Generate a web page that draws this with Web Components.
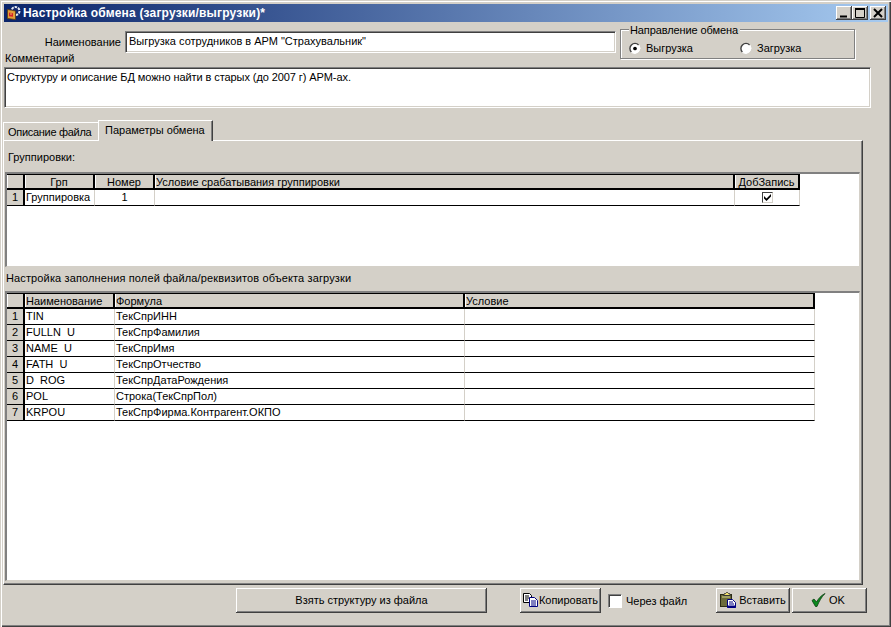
<!DOCTYPE html>
<html lang="ru">
<head>
<meta charset="utf-8">
<title>Настройка обмена</title>
<style>
  html, body { margin: 0; padding: 0; background: #d4d0c8; }
  body { font: 11px "Liberation Sans", Arial, sans-serif; color: #000; }
</style>
</head>
<body>
<x-window caption="Настройка обмена (загрузки/выгрузки)*">
  <x-header name="Выгрузка сотрудников в АРМ &quot;Страхувальник&quot;"></x-header>
  <x-sunken class="memo">Структуру и описание БД можно найти в старых (до 2007 г) АРМ-ах.</x-sunken>
  <x-tabs>
    <x-section label="Группировки:" first>
      <x-grid cols="18,70,60,580,65" aligns="c,c,c,l,c"
        head='["","Грп","Номер","Условие срабатывания группировки","ДобЗапись"]'
        data-aligns="c,l,c,l,c"
        rows='[["1","Группировка","1","","[x]"]]' style="height:95px"></x-grid>
    </x-section>
    <x-section label="Настройка заполнения полей файла/реквизитов объекта загрузки">
      <x-grid cols="18,90,350,350" aligns="c,l,l,l"
        head='["","Наименование","Формула","Условие"]'
        data-aligns="c,l,l,l"
        rows='[["1","TIN","ТекСпрИНН",""],["2","FULLN_U","ТекСпрФамилия",""],["3","NAME_U","ТекСпрИмя",""],["4","FATH_U","ТекСпрОтчество",""],["5","D_ROG","ТекСпрДатаРождения",""],["6","POL","Строка(ТекСпрПол)",""],["7","KRPOU","ТекСпрФирма.Контрагент.ОКПО",""]]'
        style="height:290px"></x-grid>
    </x-section>
  </x-tabs>
  <x-footer></x-footer>
</x-window>

<script>
const FACE = "#d4d0c8";

const ICONS = {
  copy: `<svg width="15" height="14" viewBox="0 0 15 14">
    <path d="M.5.5h6l2 2v7h-8z" fill="#fff" stroke="#000"/>
    <path d="M2 3h4M2 5h4M2 7h3" stroke="#000"/>
    <path d="M6.500 4.500h5l3 3v6h-8z" fill="#fff" stroke="#000080"/>
    <path d="M8 8h5M8 10h5M8 12h5" stroke="#000080"/>
  </svg>`,
  paste: `<svg width="17" height="16" viewBox="0 0 17 16">
    <rect x=".5" y="2.500" width="11" height="12" fill="#6b6b3a" stroke="#2c2c14"/>
    <path d="M2 4h8v2H2z" fill="#a0a060"/>
    <path d="M3.500 3.500l1-2h1l1-1h1l1 1h1l1 2z" fill="#f0e070" stroke="#333"/>
    <path d="M7.500 7.500h5l3 3v5h-8z" fill="#fff" stroke="#000080"/>
    <path d="M9 10h4M9 12h5" stroke="#000080"/>
    <path d="M7 14.500h9" stroke="#000080" stroke-width="2"/>
  </svg>`,
  ok: `<svg width="15" height="14" viewBox="0 0 15 14">
    <path d="M1 7.500l2-1.500 2.500 3C7.500 5.500 10 2.500 14 .5 10.500 4 8 8.500 6 13.500H4.500z" fill="#0a8a1e" stroke="#0b3d12" stroke-width=".8"/>
  </svg>`,
  app: `<svg width="16" height="16" viewBox="0 0 16 16">
    <circle cx="8.500" cy="6" r="4" fill="#16296e" stroke="#e4e8f0" stroke-width="2" stroke-dasharray="2.500 1"/>
    <path d="M.5 4.500l8 1.500v8.500l-8-1z" fill="#e2a03a" stroke="#5e3a10" stroke-width=".8"/>
    <path d="M2 7.500l4 .8v3.500l-4-.6z" fill="#d8202a"/>
    <path d="M3.200 9h1.600" stroke="#f5e060"/>
  </svg>`,
  min: `<svg width="14" height="12" viewBox="0 0 14 12"><path d="M3 8.500h7v2H3z" fill="#000"/></svg>`,
  max: `<svg width="14" height="12" viewBox="0 0 14 12"><path d="M2.500 1.500h9v9h-9z" fill="none" stroke="#000"/><path d="M2 2h10" stroke="#000" stroke-width="2"/></svg>`,
  close: `<svg width="14" height="12" viewBox="0 0 14 12"><path d="M3 2l8 8M11 2l-8 8" stroke="#000" stroke-width="2" fill="none"/></svg>`,
  tick: `<svg width="9" height="9" viewBox="0 0 9 9"><path d="M1 3l2.500 2.500L8 1v2.500L3.500 8 1 5.500z" fill="#000"/></svg>`,
};

class XWindow extends HTMLElement {
  constructor() {
    super();
    this.attachShadow({ mode: "open" });
  }

  connectedCallback() {
    this.shadowRoot.innerHTML = `
      <style>
        :host {
          display: flex;
          flex-direction: column;
          box-sizing: border-box;
          width: 891px;
          height: 627px;
          overflow: hidden;
          padding: 4px 3px 0 3px;
          background: ${FACE};
          box-shadow: inset 1px 1px 0 ${FACE}, inset 2px 2px 0 #fff, inset -1px -1px 0 #404040, inset -2px -2px 0 #808080;
        }
        .bar {
          flex: none;
          display: flex;
          align-items: center;
          height: 18px;
          margin-left: 1px;
          background: linear-gradient(90deg, #0a246a, #a6caf0);
          color: #fff;
          font: bold 12px "Liberation Sans", Arial, sans-serif;
          letter-spacing: .18px;
        }
        .icon { display: flex; margin: 0 0 0 3px; }
        .caption { flex: 1; white-space: nowrap; }
        .controls { display: flex; margin-right: 2px; }
        .controls span {
          display: flex;
          align-items: center;
          justify-content: center;
          width: 16px;
          height: 14px;
          background: ${FACE};
          box-shadow: inset -1px -1px 0 #404040, inset 1px 1px 0 #fff, inset -2px -2px 0 #808080;
        }
        .controls span:last-child { margin-left: 2px; }
      </style>
      <div class="bar">
        <span class="icon">${ICONS.app}</span>
        <span class="caption">${this.getAttribute("caption")}</span>
        <div class="controls"><span>${ICONS.min}</span><span>${ICONS.max}</span><span>${ICONS.close}</span></div>
      </div>
      <slot></slot>
    `;
  }
}

class XSunken extends HTMLElement {
  constructor() {
    super();
    this.attachShadow({ mode: "open" });
  }

  connectedCallback() {
    this.shadowRoot.innerHTML = `
      <style>
        :host {
          display: block;
          box-sizing: border-box;
          background: #fff;
          padding: 2px 3px 0;
          line-height: 14px;
          white-space: nowrap;
          border: 1px solid;
          border-color: #808080 #fff #fff #808080;
          box-shadow: inset 1px 1px 0 #404040, inset -1px -1px 0 ${FACE};
        }
        :host(.memo) {
          width: 867px;
          height: 41px;
          margin-left: 1px;
          padding: 2px 2px 0;
          letter-spacing: -.08px;
        }
      </style>
      <slot></slot>
    `;
  }
}

class XRadio extends HTMLElement {
  constructor() {
    super();
    this.attachShadow({ mode: "open" });
  }

  connectedCallback() {
    const dot = this.hasAttribute("checked") ? `<circle cx="6.500" cy="6.500" r="2" fill="#000"/>` : "";
    this.shadowRoot.innerHTML = `
      <style>
        :host { display: flex; align-items: center; gap: 5px; line-height: 14px; }
        svg { display: block; flex: none; }
      </style>
      <svg width="12" height="13" viewBox="0 0 13 13">
        <circle cx="6.500" cy="6.500" r="5.500" fill="#fff"/>
        <path d="M2.600 10.400A5.500 5.500 0 0 1 10.400 2.600" fill="none" stroke="#404040" stroke-width="1.500"/>
        <path d="M10.900 2.600A6 6 0 0 1 2.600 10.900" fill="none" stroke="#fff"/>
        ${dot}
      </svg>
      <slot></slot>
    `;
  }
}

class XHeader extends HTMLElement {
  constructor() {
    super();
    this.attachShadow({ mode: "open" });
  }

  connectedCallback() {
    this.shadowRoot.innerHTML = `
      <style>
        :host {
          flex: none;
          display: grid;
          grid-template-columns: 612px 239px;
          height: 45px;
          margin-left: 1px;
        }
        .left { display: flex; flex-direction: column; }
        .name { display: flex; align-items: center; gap: 4px; margin-top: 9px; }
        .name label { width: 117px; text-align: right; }
        .name x-sunken { width: 491px; height: 22px; }
        .comment { line-height: 10px; margin: 0 0 0 1px; height: 14px; }
        .group {
          box-sizing: border-box;
          height: 30px;
          margin: 7px 0 0 4px;
          border: 1px solid #808080;
          box-shadow: 1px 1px 0 #fff, inset 1px 1px 0 #fff;
        }
        .legend {
          width: fit-content;
          margin: -7px 0 0 8px;
          padding: 0 2px 0 1px;
          line-height: 14px;
          letter-spacing: -.1px;
          background: ${FACE};
        }
        .radios { display: flex; margin: 4px 0 0 8px; }
        .radios x-radio { width: 111px; }
      </style>
      <div class="left">
        <div class="name">
          <label>Наименование</label>
          <x-sunken>${this.getAttribute("name").replace(/"/g, "&quot;")}</x-sunken>
        </div>
        <div class="comment">Комментарий</div>
      </div>
      <div class="group">
        <div class="legend">Направление обмена</div>
        <div class="radios">
          <x-radio checked>Выгрузка</x-radio>
          <x-radio>Загрузка</x-radio>
        </div>
      </div>
    `;
  }
}

class XTabs extends HTMLElement {
  constructor() {
    super();
    this.attachShadow({ mode: "open" });
  }

  connectedCallback() {
    this.shadowRoot.innerHTML = `
      <style>
        :host { flex: none; display: block; margin-top: 11px; }
        .strip { display: flex; align-items: flex-end; height: 21px; }
        .tab {
          box-sizing: border-box;
          background: ${FACE};
          line-height: 14px;
          white-space: nowrap;
        }
        .off {
          width: 95px;
          height: 18px;
          padding: 2px 0 0 4px;
          letter-spacing: -.3px;
          border-left: 1px solid #fff;
          border-top: 1px solid #fff;
        }
        .on {
          position: relative;
          width: 115px;
          height: 21px;
          margin-bottom: -1px;
          padding: 2px 0 0 6px;
          border-left: 1px solid #fff;
          border-top: 1px solid #fff;
          border-right: 1px solid #404040;
          box-shadow: inset -1px 0 0 #808080;
        }
        .panel {
          box-sizing: border-box;
          width: 860px;
          height: 445px;
          padding-left: 1px;
          border-top: 1px solid #fff;
          border-left: 1px solid #fff;
          border-right: 1px solid #404040;
          border-bottom: 1px solid #404040;
          box-shadow: inset -1px -1px 0 #808080;
        }
      </style>
      <div class="strip">
        <div class="tab off">Описание файла</div>
        <div class="tab on">Параметры обмена</div>
      </div>
      <div class="panel"><slot></slot></div>
    `;
  }
}

class XSection extends HTMLElement {
  constructor() {
    super();
    this.attachShadow({ mode: "open" });
  }

  connectedCallback() {
    const first = this.hasAttribute("first");
    this.shadowRoot.innerHTML = `
      <style>
        :host { display: block; }
        .label {
          height: ${first ? 31 : 24}px;
          box-sizing: border-box;
          padding: ${first ? "9px 0 0 3px" : "4px 0 0 1px"};
          line-height: 14px;
          white-space: nowrap;
          ${first ? "" : "letter-spacing: .13px;"}
        }
      </style>
      <div class="label">${this.getAttribute("label")}</div>
      <slot></slot>
    `;
  }
}

class XGrid extends HTMLElement {
  constructor() {
    super();
    this.attachShadow({ mode: "open" });
  }

  connectedCallback() {
    const cols = this.getAttribute("cols").split(",").map(Number);
    const headAligns = this.getAttribute("aligns").split(",");
    const dataAligns = this.getAttribute("data-aligns").split(",");
    const head = JSON.parse(this.getAttribute("head"));
    const rows = JSON.parse(this.getAttribute("rows"));

    const headHtml = head
      .map((text, i) => `<div class="cell h ${headAligns[i]}">${text}</div>`)
      .join("");
    const rowsHtml = rows
      .map((row) =>
        row
          .map((text, i) => {
            const kind = i === 0 ? "cell n c" : `cell d ${dataAligns[i]}`;
            // the row line hides underscores in the original grid
            const body = text === "[x]"
              ? `<span class="box">${ICONS.tick}</span>`
              : text.replace(/_/g, '<span class="hid">_</span>');
            return `<div class="${kind}">${body}</div>`;
          })
          .join("")
      )
      .join("");

    this.shadowRoot.innerHTML = `
      <style>
        :host {
          display: block;
          box-sizing: border-box;
          width: 855px;
          background: #fff;
          border-style: solid;
          border-width: 2px 1px 1px 2px;
          border-color: #808080 ${FACE} ${FACE} #808080;
          overflow: hidden;
        }
        .table {
          display: grid;
          width: fit-content;
          grid-template-columns: ${cols.map((c) => c + "px").join(" ")};
          grid-auto-rows: 16px;
          line-height: 14px;
          box-shadow: inset 1px 0 0 #404040;
        }
        .cell {
          box-sizing: border-box;
          overflow: hidden;
          white-space: nowrap;
          padding: 0 1px;
          border-bottom: 1px solid #000;
          border-right: 1px solid ${FACE};
        }
        .c { text-align: center; }
        .hid { color: transparent; }
        .h {
          height: 16px;
          background: ${FACE};
          border-top: 1px solid #000;
          border-bottom: 2px solid #000;
          border-right: 2px solid #000;
          box-shadow: inset 1px 0 0 #fff;
          line-height: 14px;
        }
        .n { background: ${FACE}; border-right: 2px solid #000; }
        .box {
          display: inline-flex;
          align-items: center;
          justify-content: center;
          box-sizing: border-box;
          width: 11px;
          height: 11px;
          margin-top: 2px;
          vertical-align: top;
          background: #fff;
          border: 1px solid;
          border-color: #404040 #d4d0c8 #d4d0c8 #404040;
        }
      </style>
      <div class="table">${headHtml}${rowsHtml}</div>
    `;
  }
}

class XButton extends HTMLElement {
  constructor() {
    super();
    this.attachShadow({ mode: "open" });
  }

  connectedCallback() {
    const icon = this.getAttribute("icon");
    this.shadowRoot.innerHTML = `
      <style>
        :host {
          display: flex;
          align-items: center;
          justify-content: center;
          gap: 2px;
          box-sizing: border-box;
          height: 25px;
          padding-bottom: 2px;
          background: ${FACE};
          white-space: nowrap;
          box-shadow: inset -1px -1px 0 #404040, inset 1px 1px 0 #fff, inset -2px -2px 0 #808080;
        }
        svg { display: block; flex: none; }
      </style>
      ${icon ? ICONS[icon] : ""}
      <slot></slot>
    `;
  }
}

class XFooter extends HTMLElement {
  constructor() {
    super();
    this.attachShadow({ mode: "open" });
  }

  connectedCallback() {
    this.shadowRoot.innerHTML = `
      <style>
        :host { flex: none; display: flex; align-items: flex-start; margin: 3px 0 0 233px; }
        .take { width: 251px; }
        .copy { width: 81px; margin-left: 33px; gap: 1px; }
        .check { display: flex; align-items: center; width: 108px; height: 25px; margin-left: 7px; box-sizing: border-box; }
        .check i {
          display: block;
          box-sizing: border-box;
          width: 14px;
          height: 14px;
          margin-right: 4px;
          background: #fff;
          border: 1px solid;
          border-color: #808080 #fff #fff #808080;
          box-shadow: inset 1px 1px 0 #404040;
        }
        .paste { width: 74px; }
        .ok { width: 75px; margin-left: 2px; gap: 3px; padding-right: 3px; }
      </style>
      <x-button class="take">Взять структуру из файла</x-button>
      <x-button class="copy" icon="copy">Копировать</x-button>
      <div class="check"><i></i>Через файл</div>
      <x-button class="paste" icon="paste">Вставить</x-button>
      <x-button class="ok" icon="ok">OK</x-button>
    `;
  }
}

customElements.define("x-sunken", XSunken);
customElements.define("x-radio", XRadio);
customElements.define("x-button", XButton);
customElements.define("x-header", XHeader);
customElements.define("x-tabs", XTabs);
customElements.define("x-section", XSection);
customElements.define("x-grid", XGrid);
customElements.define("x-footer", XFooter);
customElements.define("x-window", XWindow);
</script>
</body>
</html>
